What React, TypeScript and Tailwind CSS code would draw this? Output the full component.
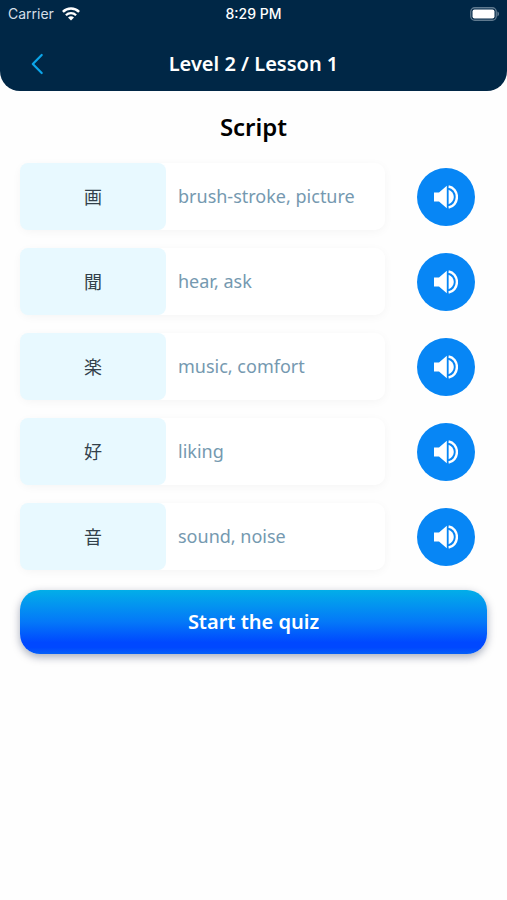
type Entry = { kanji: string; meaning: string };

const entries: Entry[] = [
  { kanji: "画", meaning: "brush-stroke, picture" },
  { kanji: "聞", meaning: "hear, ask" },
  { kanji: "楽", meaning: "music, comfort" },
  { kanji: "好", meaning: "liking" },
  { kanji: "音", meaning: "sound, noise" },
];

function StatusBar() {
  return (
    <div className="grid h-7 grid-cols-3 items-center px-2 font-['Inter','Liberation_Sans',sans-serif] text-[14px] leading-5 text-white">
      <div className="flex items-center gap-2 text-[#d5dfe7]">
        <span>Carrier</span>
        <svg className="h-3.5 w-[18px]" viewBox="0 0 18 14" fill="none" aria-label="Wi-Fi">
          <path d="M.9 4.9a11.6 11.6 0 0 1 16.2 0" stroke="#fff" strokeWidth="2.5" />
          <path d="M3.9 8.2a7.3 7.3 0 0 1 10.2 0" stroke="#fff" strokeWidth="2.3" />
          <path d="M9 13.6 6 10.6a4.3 4.3 0 0 1 6 0z" fill="#fff" />
        </svg>
      </div>
      <span className="text-center font-medium">8:29 PM</span>
      <svg className="h-3.5 w-[30px] justify-self-end" viewBox="0 0 30 14" fill="none" aria-label="Battery">
        <rect x="1.75" y="0.75" width="25.5" height="12.5" rx="4" stroke="#5f7a8f" strokeWidth="1.3" />
        <rect x="3.5" y="2.5" width="22" height="9" rx="2" fill="#fff" />
        <path d="M28.4 4.6c2.2.8 2.2 4 0 4.8z" fill="#5f7a8f" />
      </svg>
    </div>
  );
}

function SpeakerIcon() {
  return (
    <svg className="size-6" viewBox="0 0 24 24" fill="none" aria-hidden="true">
      <path d="M0 7.6h5L12.8.8v22.4L5 16.4H0z" fill="currentColor" />
      <path d="M14.6 4.8c3.2 1.2 5.2 4 5.2 7.2s-2 6-5.2 7.2z" fill="currentColor" />
      <path d="M14.6 1.5c4.8.8 8.3 5.3 8.3 10.5s-3.5 9.7-8.3 10.5" stroke="currentColor" strokeWidth="2.4" />
    </svg>
  );
}

function Header() {
  return (
    <header className="rounded-b-[20px] bg-[#002746]">
      <StatusBar />
      <div className="grid h-[63px] grid-cols-[48px_1fr_48px] items-center px-3 pt-2">
        <button type="button" aria-label="Back" className="flex h-12 w-12 items-center justify-center">
          <svg className="h-6 w-4" viewBox="0 0 16 24" fill="none">
            <path d="M13.7 3 4.8 12l8.9 9" stroke="#0ba5e9" strokeWidth="2.2" strokeLinecap="round" strokeLinejoin="round" />
          </svg>
        </button>
        <h1 className="text-center text-[20px] leading-6 font-semibold text-white">Level 2 / Lesson 1</h1>
      </div>
    </header>
  );
}

function EntryRow({ kanji, meaning }: Entry) {
  return (
    <li className="flex items-center pr-3">
      <div className="mr-8 flex h-[67px] flex-1 items-center rounded-[10px] bg-white shadow-[0_2px_10px_rgba(0,0,0,0.04)]">
        <span
          lang="ja"
          className="flex w-2/5 items-center justify-center self-stretch rounded-[8px] bg-[#e8f9ff] pb-0.5 font-['Noto_Sans_CJK_JP',sans-serif] text-[18px] leading-6 text-[#33414b]"
        >
          {kanji}
        </span>
        <span className="pb-0.5 pl-3 text-[18px] leading-6 text-[#7599b0]">{meaning}</span>
      </div>
      <button
        type="button"
        aria-label={`Play ${meaning}`}
        className="flex size-[58px] shrink-0 items-center justify-center rounded-full bg-[#0786f5] text-white"
      >
        <SpeakerIcon />
      </button>
    </li>
  );
}

export default function App() {
  return (
    <div className="min-h-screen bg-[#fefefe] font-['Noto_Sans','Noto_Sans_CJK_JP',sans-serif]">
      <Header />
      <main className="px-5 pt-5">
        <h2 className="text-center text-[24px] leading-8 font-semibold text-black">Script</h2>
        <ul className="mt-5 flex flex-col gap-[18px]">
          {entries.map((entry) => (
            <EntryRow key={entry.kanji} {...entry} />
          ))}
        </ul>
        <button
          type="button"
          className="mt-5 h-16 w-full rounded-[20px] bg-[linear-gradient(to_bottom,#02aee8_0%,#0478f8_50%,#0048ff_82%,#0048ff_90%,#0560f8_100%)] text-[20px] leading-6 font-semibold text-white shadow-[0_3px_8px_rgba(0,20,60,0.35)]"
        >
          Start the quiz
        </button>
      </main>
    </div>
  );
}
